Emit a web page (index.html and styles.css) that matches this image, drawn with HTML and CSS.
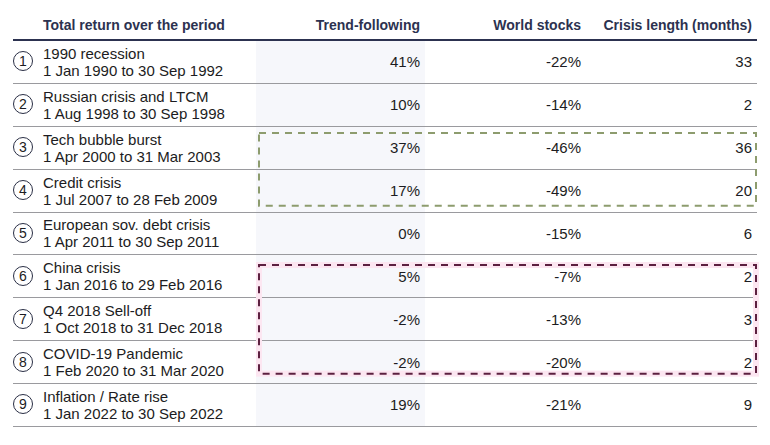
FILE: index.html
```html
<!DOCTYPE html>
<html>
<head>
<meta charset="utf-8">
<link rel="stylesheet" href="styles.css">
</head>
<body>
<div class="table">
  <div class="row head">
    <div class="cell c1">Total return over the period</div>
    <div class="cell num">Trend-following</div>
    <div class="cell num">World stocks</div>
    <div class="cell num">Crisis length (months)</div>
  </div>

  <div class="row">
    <div class="cell c1"><span class="badge">1</span><div class="label"><div>1990 recession</div><div>1 Jan 1990 to 30 Sep 1992</div></div></div>
    <div class="cell num tf">41%</div>
    <div class="cell num">-22%</div>
    <div class="cell num">33</div>
  </div>
  <div class="row">
    <div class="cell c1"><span class="badge">2</span><div class="label"><div>Russian crisis and LTCM</div><div>1 Aug 1998 to 30 Sep 1998</div></div></div>
    <div class="cell num tf">10%</div>
    <div class="cell num">-14%</div>
    <div class="cell num">2</div>
  </div>

  <div class="group green">
    <div class="row">
      <div class="cell c1"><span class="badge">3</span><div class="label"><div>Tech bubble burst</div><div>1 Apr 2000 to 31 Mar 2003</div></div></div>
      <div class="cell num tf">37%</div>
      <div class="cell num">-46%</div>
      <div class="cell num">36</div>
    </div>
    <div class="row">
      <div class="cell c1"><span class="badge">4</span><div class="label"><div>Credit crisis</div><div>1 Jul 2007 to 28 Feb 2009</div></div></div>
      <div class="cell num tf">17%</div>
      <div class="cell num">-49%</div>
      <div class="cell num">20</div>
    </div>
    <div class="frame"><svg><rect class="dash"/></svg></div>
  </div>

  <div class="row">
    <div class="cell c1"><span class="badge">5</span><div class="label"><div>European sov. debt crisis</div><div>1 Apr 2011 to 30 Sep 2011</div></div></div>
    <div class="cell num tf">0%</div>
    <div class="cell num">-15%</div>
    <div class="cell num">6</div>
  </div>

  <div class="group maroon">
    <div class="row">
      <div class="cell c1"><span class="badge">6</span><div class="label"><div>China crisis</div><div>1 Jan 2016 to 29 Feb 2016</div></div></div>
      <div class="cell num tf">5%</div>
      <div class="cell num">-7%</div>
      <div class="cell num">2</div>
    </div>
    <div class="row">
      <div class="cell c1"><span class="badge">7</span><div class="label"><div>Q4 2018 Sell-off</div><div>1 Oct 2018 to 31 Dec 2018</div></div></div>
      <div class="cell num tf">-2%</div>
      <div class="cell num">-13%</div>
      <div class="cell num">3</div>
    </div>
    <div class="row">
      <div class="cell c1"><span class="badge">8</span><div class="label"><div>COVID-19 Pandemic</div><div>1 Feb 2020 to 31 Mar 2020</div></div></div>
      <div class="cell num tf">-2%</div>
      <div class="cell num">-20%</div>
      <div class="cell num">2</div>
    </div>
    <div class="frame"><svg><rect class="halo"/><rect class="dash"/></svg></div>
  </div>

  <div class="row">
    <div class="cell c1"><span class="badge">9</span><div class="label"><div>Inflation / Rate rise</div><div>1 Jan 2022 to 30 Sep 2022</div></div></div>
    <div class="cell num tf">19%</div>
    <div class="cell num">-21%</div>
    <div class="cell num">9</div>
  </div>
</div>
</body>
</html>
```
FILE: styles.css
```css
html, body {
  margin: 0;
  padding: 0;
  background: #ffffff;
}

body {
  font-family: "Liberation Sans", Arial, sans-serif;
  color: #1c1c22;
}

.table {
  width: 744px;
  margin-left: 13px;
}

.row {
  display: grid;
  grid-template-columns: 243px 169px 161px 171px;
  height: 42.875px;
  box-sizing: border-box;
  border-bottom: 1px solid #9a9a9e;
}

.row.head {
  height: 41px;
  border-bottom: 2px solid #2c3250;
  color: #2c3250;
  font-weight: bold;
  font-size: 14px;
  line-height: 17px;
}

.row.head .cell {
  align-items: flex-end;
  padding-bottom: 5px;
}

.row.head .c1 {
  padding-left: 30px;
}

.cell {
  display: flex;
  align-items: center;
  box-sizing: border-box;
  font-size: 15px;
  line-height: 17px;
}

.row.head .cell {
  font-size: 14px;
}

.num {
  justify-content: flex-end;
  padding-right: 5px;
}

.tf {
  background: #f6f7fb;
}

.c1 {
  padding-left: 0;
}

.badge {
  width: 20px;
  height: 20px;
  box-sizing: border-box;
  border: 1px solid #2a2f45;
  border-radius: 50%;
  display: flex;
  align-items: center;
  justify-content: center;
  font-size: 14px;
  line-height: 1;
  margin-right: 10px;
  margin-top: -1px;
  flex: none;
}

.label {
  display: flex;
  flex-direction: column;
}

.group {
  position: relative;
}

.frame {
  position: absolute;
  left: 245px;
  right: 0;
}

.green .frame {
  top: 5px;
  bottom: 6px;
}

.maroon .frame {
  top: 9px;
  bottom: 9px;
}

.frame svg {
  display: block;
  width: 100%;
  height: 100%;
  overflow: visible;
}

.frame rect {
  x: 1px;
  y: 1px;
  width: calc(100% - 2px);
  height: calc(100% - 2px);
  fill: none;
}

.frame .dash {
  stroke-width: 2;
  stroke-dasharray: 7 6;
}

.green .dash {
  stroke: #8d9c6e;
}

.maroon .dash {
  stroke: #5c2040;
}

.maroon .halo {
  stroke: #fce6f1;
  stroke-width: 6;
}
```
